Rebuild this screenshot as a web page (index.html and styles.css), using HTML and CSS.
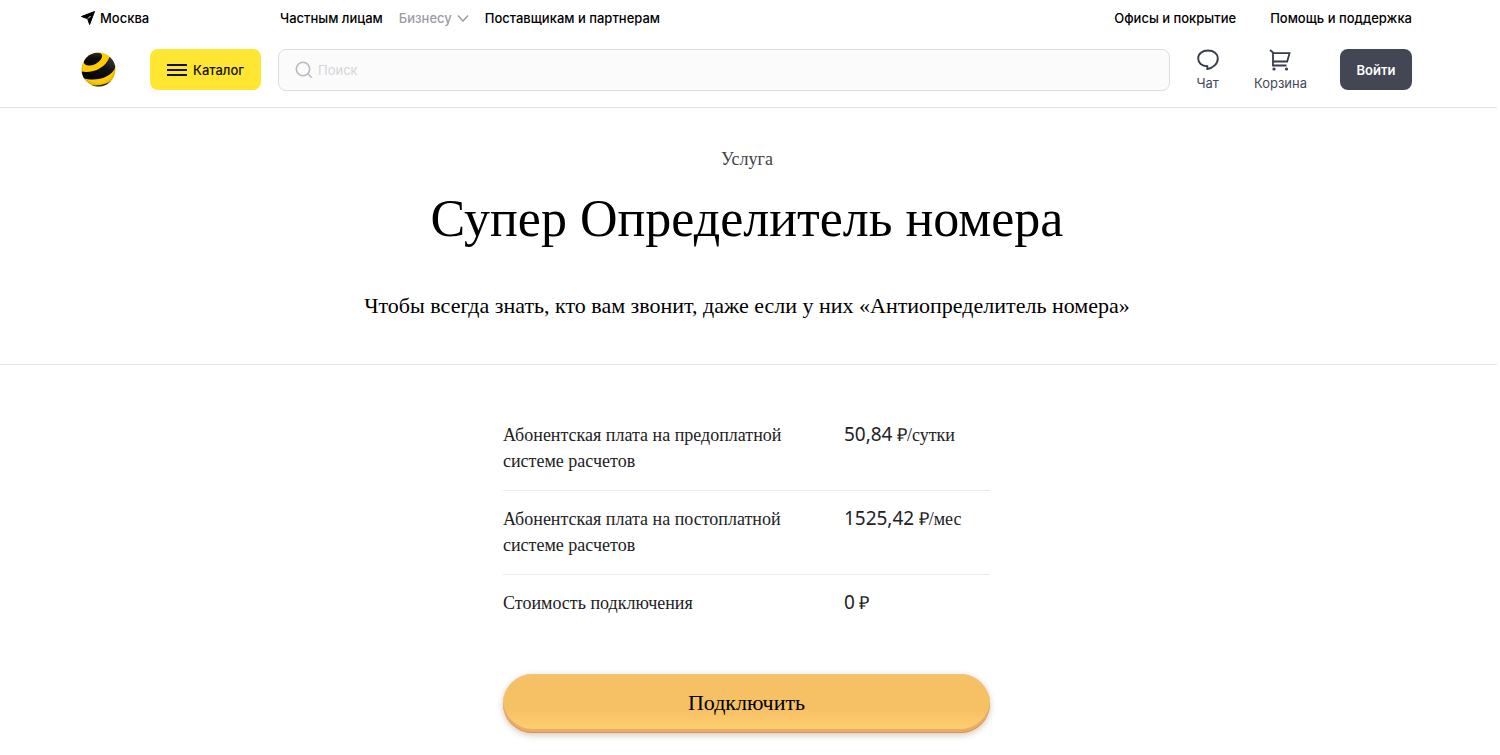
FILE: index.html
```html
<!DOCTYPE html>
<html lang="ru">
<head>
<meta charset="utf-8">
<meta name="viewport" content="width=device-width, initial-scale=1">
<title>Супер Определитель номера</title>
<link rel="stylesheet" href="styles.css">
</head>
<body>
<header class="header">
  <div class="topbar">
    <a class="city" href="#"><svg class="city-icon" width="14" height="14" viewBox="0 0 14 14" aria-hidden="true"><path d="M13.5 .5 8.600 13.500 6.700 7.800 .5 5.500Z" stroke="#000" stroke-linejoin="round"/><path d="M7 7.500 9.500 5" stroke="#fff"/></svg>Москва</a>
    <nav class="nav">
      <a href="#">Частным лицам</a>
      <a class="nav-muted" href="#">Бизнесу<svg width="12" height="8" viewBox="0 0 12 8" fill="none" aria-hidden="true"><path d="m1 1.500 5 5.500L11 1.500" stroke="#9c9ca3" stroke-width="1.500"/></svg></a>
      <a href="#">Поставщикам и партнерам</a>
    </nav>
    <nav class="nav-help">
      <a href="#">Офисы и покрытие</a>
      <a href="#">Помощь и поддержка</a>
    </nav>
  </div>
  <div class="mainbar">
    <a class="logo" href="#" aria-label="На главную">
      <svg width="36" height="36" viewBox="0 0 36 36" aria-hidden="true">
        <defs>
          <clipPath id="ball"><circle cx="17.500" cy="17.500" r="17"/></clipPath>
          <radialGradient id="shade" cx=".5" cy=".45" r=".55"><stop offset=".8" stop-color="#000" stop-opacity="0"/><stop offset="1" stop-color="#000" stop-opacity=".2"/></radialGradient>
          <linearGradient id="gloss" x1="0" y1="1" x2="1" y2="0"><stop offset="0" stop-color="#000"/><stop offset=".6" stop-color="#111"/><stop offset="1" stop-color="#444"/></linearGradient>
        </defs>
        <g clip-path="url(#ball)">
          <rect width="36" height="36" fill="#ffcb05"/>
          <ellipse cx="12" cy="7" rx="9.800" ry="5.500" transform="rotate(-27 12 7)" fill="url(#gloss)"/>
          <path d="M0 19.500C11 21.500 24 17 28.500 5C32 7 35 11 35 14.500C30 26 15 30 2 26Z" fill="url(#gloss)"/>
          <path d="M4 31.500C14 35.500 27 33 34 26L32 36H6Z" fill="#222"/>
          <circle cx="17.500" cy="17.500" r="17" fill="url(#shade)"/>
        </g>
      </svg>
    </a>
    <button class="catalog" type="button"><svg width="20" height="12" viewBox="0 0 20 12" aria-hidden="true"><path d="M0 1h20M0 6h20M0 11h20" stroke="#111" stroke-width="2"/></svg>Каталог</button>
    <label class="search">
      <svg width="18" height="18" viewBox="0 0 18 18" fill="none" aria-hidden="true"><circle cx="8" cy="8" r="6.700" stroke="#b9b9c3" stroke-width="1.600"/><path d="m12.800 12.800 4 4" stroke="#b9b9c3" stroke-width="1.600"/></svg>
      <input type="search" placeholder="Поиск" aria-label="Поиск">
    </label>
    <div class="actions">
      <a class="action" href="#"><svg width="22" height="22" viewBox="0 0 22 22" fill="none" aria-hidden="true"><path d="M10.300 17.200C4.700 17.200 1.200 13.900 1.200 9.400C1.200 4.900 5.200 1.500 11 1.500C16.800 1.500 20.800 4.900 20.800 9.400C20.800 14.800 16 19.200 10.300 20Z" stroke="#383d4b" stroke-width="1.900"/></svg>Чат</a>
      <a class="action" href="#"><svg width="22" height="22" viewBox="0 0 22 22" fill="none" stroke="#383d4b" stroke-width="1.800" aria-hidden="true"><path d="M1 1 4 3.500V16.500H17.500M4 4.200H20.500L18.200 12.500H4"/><circle cx="5" cy="20" r="1.600" fill="#383d4b" stroke="none"/><circle cx="17.500" cy="20" r="1.600" fill="#383d4b" stroke="none"/></svg>Корзина</a>
    </div>
    <button class="login" type="button">Войти</button>
  </div>
</header>
<main>
  <section class="hero">
    <p class="kind">Услуга</p>
    <h1 class="title">Супер Определитель номера</h1>
    <p class="lead">Чтобы всегда знать, кто вам звонит, даже если у них «Антиопределитель номера»</p>
  </section>
  <section class="details">
    <table class="prices">
      <tr><th scope="row">Абонентская плата на предоплатной системе расчетов</th><td><span class="sum">50,84</span> ₽/сутки</td></tr>
      <tr><th scope="row">Абонентская плата на постоплатной системе расчетов</th><td><span class="sum">1525,42</span> ₽/мес</td></tr>
      <tr><th scope="row">Стоимость подключения</th><td><span class="sum">0</span> ₽</td></tr>
    </table>
    <button class="connect" type="button">Подключить</button>
  </section>
</main>
</body>
</html>
```
FILE: styles.css
```css
* {
  box-sizing: border-box;
}

body {
  margin: 0 3px 0 0;
  background: #fff;
  color: #000;
  font-family: "Liberation Serif", "Times New Roman", serif;
}

a {
  color: inherit;
  text-decoration: none;
}

p,
h1 {
  margin: 0;
}

button,
input {
  font: inherit;
  color: inherit;
}

.header {
  padding: 8px 85px 14px 81px;
  border-bottom: 1px solid #e0e0e3;
  font: 500 13px/20px Inter, "Noto Sans", sans-serif;
}

.topbar,
.mainbar,
.nav,
.nav-help,
.city,
.nav-muted {
  display: flex;
  align-items: center;
}

.city {
  width: 199px;
  gap: 5px;
}

.nav {
  gap: 16px;
}

.nav-muted {
  gap: 5px;
  color: #9c9ca3;
}

.nav-help {
  gap: 34px;
  margin-left: auto;
}

.mainbar {
  align-items: flex-start;
  margin-top: 21px;
}

.logo {
  display: flex;
  align-items: center;
  width: 69px;
  height: 41px;
}

.catalog {
  display: flex;
  align-items: center;
  justify-content: center;
  gap: 6px;
  width: 111px;
  height: 41px;
  padding: 0;
  border: 0;
  border-radius: 8px;
  background: #ffe633;
  color: #111;
}

.search {
  display: flex;
  flex: 1;
  align-items: center;
  gap: 5px;
  height: 42px;
  margin: 0 26px 0 17px;
  padding: 0 16px;
  border: 1px solid #dedee2;
  border-radius: 8px;
  background: #fbfbfb;
}

.search input {
  flex: 1;
  min-width: 0;
  padding: 0;
  border: 0;
  outline: 0;
  background: none;
  font-weight: 400;
}

.search input::placeholder {
  color: #d5d5da;
  opacity: 1;
}

.actions {
  display: flex;
  gap: 35px;
  margin-right: 33px;
}

.action {
  display: flex;
  flex-direction: column;
  align-items: center;
  gap: 2px;
  color: #454956;
  font-weight: 400;
}

.login {
  width: 72px;
  height: 41px;
  padding: 0;
  border: 0;
  border-radius: 8px;
  background: #434754;
  color: #fff;
  font-weight: 600;
}

.hero {
  padding: 38px 3px 43px 0;
  border-bottom: 1px solid #e4e4e4;
  text-align: center;
}

.kind {
  color: #444;
  font-size: 18px;
  line-height: 26px;
}

.title {
  margin-top: 15px;
  font-size: 52px;
  font-weight: 400;
  line-height: 64px;
}

.lead {
  margin-top: 40px;
  font-size: 22px;
  line-height: 30px;
}

.details {
  padding: 42px 4px 22px 0;
}

.prices,
.connect {
  width: 100%;
  max-width: 487px;
  margin: 0 auto;
}

.prices {
  border-collapse: collapse;
  font-size: 18px;
  line-height: 26px;
  color: #222;
}

.prices th,
.prices td {
  padding: 15px 0 16px;
  border-bottom: 1px solid #ebebeb;
  font-weight: 400;
  text-align: left;
  vertical-align: top;
}

.prices th {
  width: 70%;
  padding-right: 50px;
}

.prices tr:last-child > * {
  border-bottom: 0;
}

.sum {
  font-family: "Noto Sans", sans-serif;
  font-size: 19px;
  line-height: 20px;
}

.connect {
  display: block;
  height: 59px;
  margin-top: 42px;
  padding: 0 0 2px;
  border: 0;
  border-radius: 30px;
  background: linear-gradient(#f6c065 60%, #ffd173);
  box-shadow: inset 0 -1px #dc9552, inset 0 -4px #e9ad68, inset 0 1px #eac685, 0 2px 6px rgba(100, 65, 20, .3);
  font-size: 22px;
}
```
